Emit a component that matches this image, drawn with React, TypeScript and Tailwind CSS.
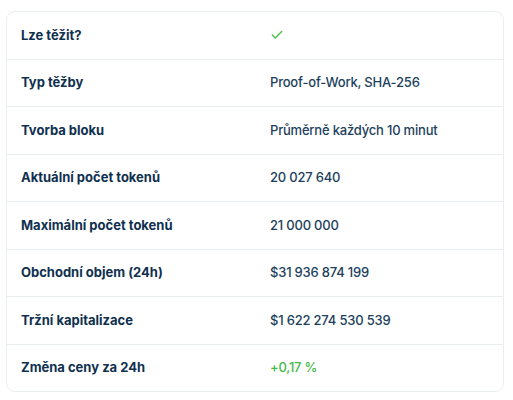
import { Check } from "lucide-react";

const rows: { label: string; value?: string; kind?: "check" | "up" }[] = [
  { label: "Lze těžit?", kind: "check" },
  { label: "Typ těžby", value: "Proof-of-Work, SHA-256" },
  { label: "Tvorba bloku", value: "Průměrně každých 10 minut" },
  { label: "Aktuální počet tokenů", value: "20 027 640" },
  { label: "Maximální počet tokenů", value: "21 000 000" },
  { label: "Obchodní objem (24h)", value: "$31 936 874 199" },
  { label: "Tržní kapitalizace", value: "$1 622 274 530 539" },
  { label: "Změna ceny za 24h", value: "+0,17 %", kind: "up" },
];

export default function App() {
  return (
    <div className="h-[400px] w-[513px] bg-white pl-[6px] pt-[11px] font-['Inter',sans-serif]">
      <div className="flex h-[381px] w-[498px] flex-col divide-y divide-[#e9eef3] rounded-[9px] border border-[#e9eef3]">
        {rows.map((row) => (
          <div key={row.label} className="flex flex-1 items-center">
            <div className="w-[263px] pl-[14px] text-[13px] font-bold text-[#0f304f]">{row.label}</div>
            <div className="text-[13px] font-medium tracking-[-0.2px]">
              {row.kind === "check" ? (
                <Check className="h-[14px] w-[14px] text-[#4cc24c]" strokeWidth={2.5} />
              ) : (
                <span className={row.kind === "up" ? "text-[#45b84a]" : "text-[#213f5c]"}>{row.value}</span>
              )}
            </div>
          </div>
        ))}
      </div>
    </div>
  );
}
